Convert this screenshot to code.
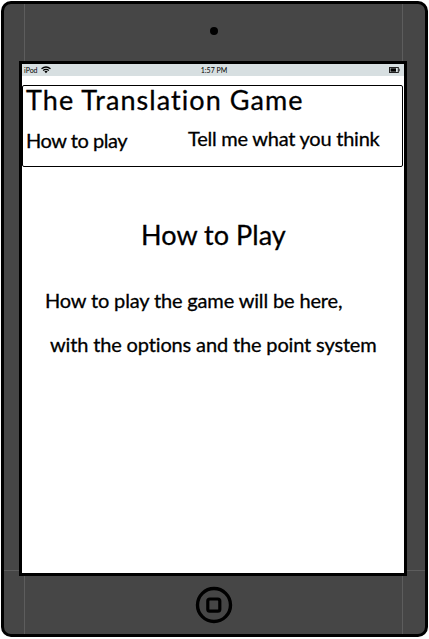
<script>
  const links = ['How to play', 'Tell me what you think'];
</script>

<div class="page">
  <div class="device">
    <i class="seam left"></i>
    <i class="seam right"></i>
    <i class="seam low"></i>
    <div class="top"><span class="camera"></span></div>
    <main class="screen">
      <div class="status">
        <div class="carrier">
          <span>iPod</span>
          <svg width="10" height="8" viewBox="0 0 10 8" fill="none" stroke="#000" stroke-width="1.3">
            <path d="M.5 2.8Q5-.8 9.5 2.8M2.1 4.5Q5 2.2 7.9 4.5" />
            <path d="M3.4 5.4Q5 4.2 6.6 5.4L5 7.2Z" fill="#000" stroke="none" />
          </svg>
        </div>
        <span class="time">1:57 PM</span>
        <svg class="battery" width="11" height="6" viewBox="0 0 11 6">
          <rect x=".5" y=".5" width="8.8" height="5" fill="#d7dfe1" stroke="#222" />
          <rect x="1.5" y="1.3" width="5.5" height="3.4" fill="#000" />
          <rect x="9.7" y="1.7" width="1" height="2.6" fill="#333" />
        </svg>
      </div>
      <header>
        <h1>The Translation Game</h1>
        <nav>
          <span class="play">{links[0]}</span>
          <span class="tell">{links[1]}</span>
        </nav>
      </header>
      <h2>How to Play</h2>
      <p class="first">How to play the game will be here,</p>
      <p class="second">with the options and the point system</p>
    </main>
    <div class="bottom">
      <svg width="38" height="38" viewBox="0 0 38 38" fill="none" stroke="#000">
        <circle cx="19" cy="19" r="16.5" stroke-width="3.4" />
        <rect x="12.8" y="13" width="12" height="12.2" rx="2" stroke-width="3.2" />
      </svg>
    </div>
  </div>
</div>

<style>
  :global(body) { background: #fff; }
  .page {
    box-sizing: border-box;
    width: 429px;
    height: 639px;
    padding: 1px 0 0 1px;
    overflow: hidden;
    color: #000;
    font-family: Lato, "Open Sans", sans-serif;
    font-variant-ligatures: none;
  }
  .device {
    position: relative;
    box-sizing: border-box;
    display: flex;
    flex-direction: column;
    align-items: center;
    width: 427px;
    height: 636px;
    border: 3px solid #000;
    border-radius: 10px;
    background: #464646;
    overflow: hidden;
  }
  .seam { position: absolute; background: #5d5d5d; }
  .left, .right { top: 0; bottom: 0; width: 1px; }
  .left { left: 20px; }
  .right { left: 398px; }
  .low { top: 566px; left: 0; right: 0; height: 1px; }
  .top { flex: none; display: flex; justify-content: center; height: 57px; padding-right: 1px; }
  .camera { width: 8px; height: 8px; margin-top: 23px; border-radius: 50%; background: #000; }
  .screen {
    position: relative;
    flex: none;
    align-self: flex-start;
    box-sizing: border-box;
    width: 388px;
    height: 515px;
    margin-left: 15px;
    border: 3px solid #000;
    background: #fff;
  }
  .status {
    display: grid;
    grid-template-columns: 1fr auto 1fr;
    align-items: center;
    height: 12px;
    padding: 0 4px 0 2px;
    background: #d7dfe1;
    font-size: 7px;
    line-height: 10px;
  }
  .carrier { display: flex; align-items: center; gap: 3px; }
  .time { padding-left: 3px; margin-right: -1px; }
  .battery { justify-self: end; }
  header {
    box-sizing: border-box;
    width: 381px;
    height: 82px;
    margin-top: 9px;
    border: 1.5px solid #000;
    border-radius: 2px;
  }
  h1, h2, p { margin: 0; font-weight: 400; white-space: nowrap; -webkit-text-stroke: 0.3px #000; }
  h1 { margin-top: -1px; padding-left: 3px; font-size: 27px; line-height: 30px; letter-spacing: 1.05px; }
  nav { display: flex; font-size: 20px; line-height: 24px; white-space: nowrap; -webkit-text-stroke: 0.3px #000; }
  .play { width: 162px; padding: 13px 0 0 3px; letter-spacing: -0.45px; }
  .tell { padding-top: 11px; letter-spacing: -0.24px; }
  h2 { margin-top: 53px; padding-left: 119px; font-size: 27px; line-height: 30px; letter-spacing: 0.05px; }
  p { font-size: 20px; line-height: 24px; }
  .first { padding: 38px 0 0 23px; letter-spacing: -0.15px; }
  .second { padding: 20px 0 0 28px; letter-spacing: -0.15px; }
  .bottom { flex: 1; display: flex; align-items: center; padding-right: 1px; }
</style>
